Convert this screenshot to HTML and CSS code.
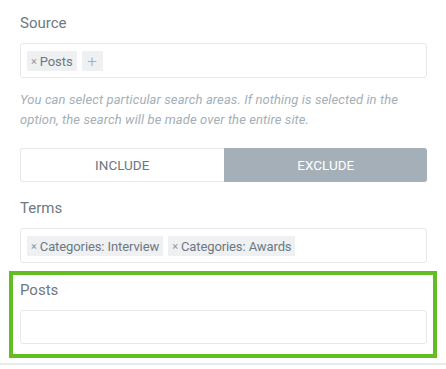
FILE: index.html
```html
<!DOCTYPE html>
<html lang="en">
<head>
  <meta charset="UTF-8">
  <meta name="viewport" content="width=device-width, initial-scale=1.0">
  <title>Search controls</title>
  <link rel="stylesheet" href="styles.css">
</head>
<body>
  <div class="panel">
    <div class="control">
      <label class="control-label">Source</label>
      <div class="tag-box">
        <span class="tag"><span class="tag-x">×</span>Posts</span>
        <span class="tag tag-add">+</span>
      </div>
      <p class="help">You can select particular search areas. If nothing is selected in the option, the search will be made over the entire site.</p>
    </div>

    <div class="toggle">
      <button class="toggle-btn">Include</button>
      <button class="toggle-btn active">Exclude</button>
    </div>

    <div class="control terms">
      <label class="control-label">Terms</label>
      <div class="tag-box">
        <span class="tag"><span class="tag-x">×</span>Categories: Interview</span>
        <span class="tag"><span class="tag-x">×</span>Categories: Awards</span>
      </div>
    </div>

    <div class="control highlight">
      <label class="control-label">Posts</label>
      <div class="tag-box empty"></div>
    </div>
  </div>
  <div class="divider"></div>
</body>
</html>
```

FILE: styles.css
```css
body {
  margin: 0;
  font-family: Roboto, 'Liberation Sans', Arial, sans-serif;
  background: #fff;
}
.panel {
  padding: 13px 19px 0 20px;
}
.control-label {
  display: block;
  font-size: 15px;
  line-height: 20px;
  color: #6d7882;
}
.tag-box {
  margin-top: 10px;
  display: flex;
  gap: 5px;
  padding: 7px 6px 6px 6px;
  border: 1px solid #e6e8ec;
  border-radius: 3px;
}
.tag {
  display: flex;
  align-items: center;
  height: 20px;
  padding: 0 4px 0 4px;
  background: #eef0f2;
  font-size: 13px;
  letter-spacing: -0.1px;
  color: #6d7882;
}
.tag-x {
  font-size: 11px;
  color: #8d99a3;
  margin-right: 3px;
}
.tag-add {
  width: 21px;
  padding: 0;
  justify-content: center;
  font-size: 17px;
  color: #a4afb7;
  font-weight: 300;
}
.help {
  margin: 12px 0 0;
  font-size: 13px;
  line-height: 20px;
  font-style: italic;
  letter-spacing: 0.1px;
  color: #a4afb7;
}
.toggle {
  margin-top: 18px;
  display: flex;
  height: 34px;
}
.toggle-btn {
  flex: 1;
  margin: 0;
  border: 1px solid #e6e8ec;
  background: #fff;
  font-family: inherit;
  font-size: 13.5px;
  text-transform: uppercase;
  color: #6d7882;
  border-radius: 3px 0 0 3px;
  border-right: none;
}
.toggle-btn.active {
  background: #a4afb7;
  border-color: #a4afb7;
  color: #fff;
  border-radius: 0 3px 3px 0;
}
.terms {
  margin-top: 16px;
}
.highlight {
  margin: 8px -10px 0 -11px;
  border: 4px solid #61bd22;
  padding: 5px 6px 10px 7px;
}
.tag-box.empty {
  height: 18px;
  padding: 7px 6px;
}
.divider {
  margin-top: 5px;
  height: 2px;
  background: #e9ecef;
}
```
